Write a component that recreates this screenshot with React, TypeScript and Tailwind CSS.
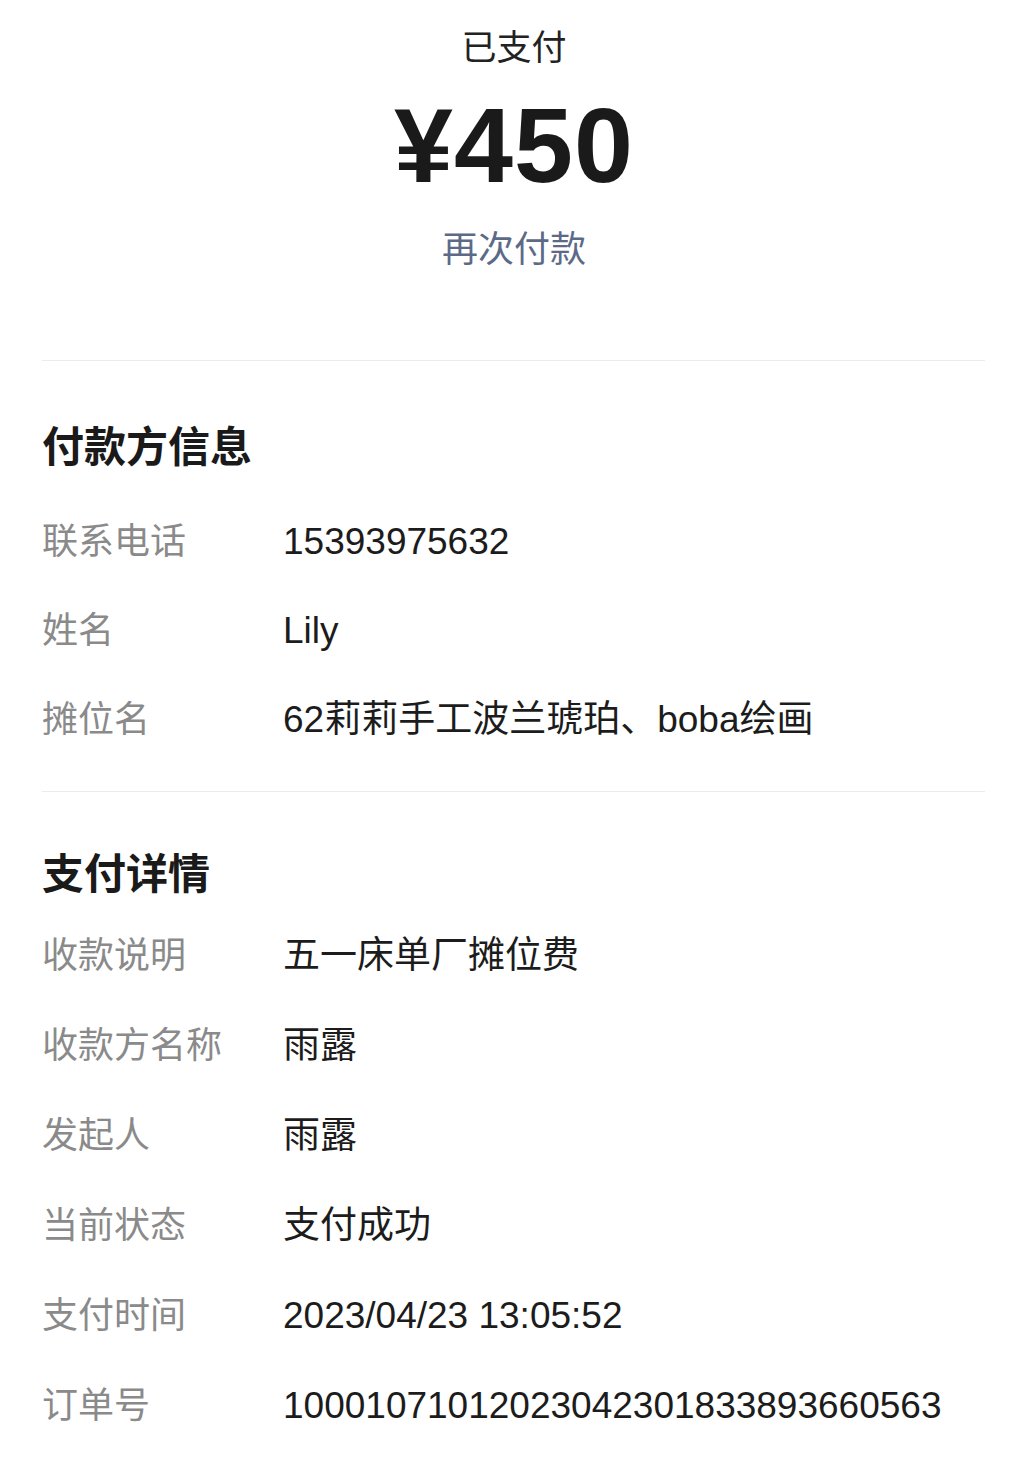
import React from "react";

const FONT = { fontFamily: '"Liberation Sans", "Noto Sans CJK SC", sans-serif' };

function Row({ label, value, h }: { label: string; value: string; h: string }) {
  return (
    <div className={`flex items-center ${h}`}>
      <div className="w-[241px] shrink-0 text-[36px] leading-[44px] text-[#8a8a8a]">{label}</div>
      <div className="text-[37px] leading-[44px] text-[#1c1c1c] whitespace-nowrap">{value}</div>
    </div>
  );
}

export default function App() {
  return (
    <div className="w-[1028px] h-[1460px] bg-white overflow-hidden" style={FONT}>
      <div className="flex flex-col items-center pt-[26px]">
        <div className="text-[35px] leading-[43px] text-[#222]">已支付</div>
        <div className="mt-[21px] text-[106px] leading-[110px] font-bold text-[#1a1a1a] tracking-[1px]">¥450</div>
        <div className="mt-[28px] text-[36px] leading-[43px] text-[#5c6a88]">再次付款</div>
      </div>
      <div className="pl-[42px] pr-[43px]">
        <div className="mt-[89px] h-px bg-[#ececec]" />
        <div className="mt-[62px] text-[42px] leading-[50px] font-bold text-[#1a1a1a]">付款方信息</div>
        <div className="mt-[24px] flex flex-col">
          <Row h="h-[89px]" label="联系电话" value="15393975632" />
          <Row h="h-[89px]" label="姓名" value="Lily" />
          <Row h="h-[89px]" label="摊位名" value="62莉莉手工波兰琥珀、boba绘画" />
        </div>
        <div className="mt-[27px] h-px bg-[#ececec]" />
        <div className="mt-[58px] text-[42px] leading-[50px] font-bold text-[#1a1a1a]">支付详情</div>
        <div className="mt-[11px] flex flex-col">
          <Row h="h-[90px]" label="收款说明" value="五一床单厂摊位费" />
          <Row h="h-[90px]" label="收款方名称" value="雨露" />
          <Row h="h-[90px]" label="发起人" value="雨露" />
          <Row h="h-[90px]" label="当前状态" value="支付成功" />
          <Row h="h-[90px]" label="支付时间" value="2023/04/23 13:05:52" />
          <Row h="h-[90px]" label="订单号" value="10001071012023042301833893660563" />
        </div>
      </div>
    </div>
  );
}
